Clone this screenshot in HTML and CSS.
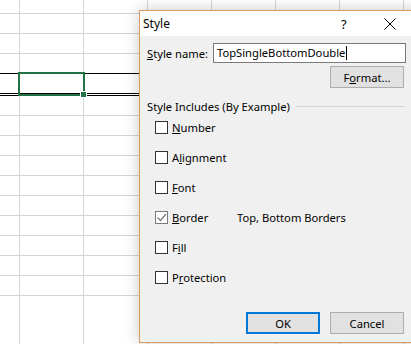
FILE: index.html
```html
<!doctype html>
<html lang="en">
  <head>
    <meta charset="UTF-8" />
    <title>Style</title>
    <link rel="stylesheet" href="styles.css">
  </head>
  <body>
    <div class="sheet">
      <div class="row first"></div>
      <div class="row"></div>
      <div class="row"></div>
      <div class="row top-single"></div>
      <div class="row bottom-double"></div>
      <div class="row"></div>
      <div class="row"></div>
      <div class="row"></div>
      <div class="row"></div>
      <div class="row"></div>
      <div class="row"></div>
      <div class="row"></div>
      <div class="row"></div>
      <div class="row"></div>
      <div class="row"></div>
      <div class="selection"><span class="handle"></span></div>
    </div>

    <div class="dialog">
      <div class="titlebar">
        <span class="title">Style</span>
        <span class="help">?</span>
        <svg class="close" width="12" height="12" viewBox="0 0 12 12">
          <path d="M0.5 0.5 L11.5 11.5 M11.5 0.5 L0.5 11.5" stroke="#000" stroke-width="1" fill="none" />
        </svg>
      </div>

      <div class="content">
        <div class="name-row">
          <label class="name-label"><u>S</u>tyle name:</label>
          <div class="name-input">TopSingleBottomDouble<span class="caret"></span></div>
        </div>
        <button class="btn format">F<u>o</u>rmat...</button>

        <div class="group-head">
          <span>Style Includes (By Example)</span>
          <span class="rule"></span>
        </div>

        <div class="options">
          <div class="option">
            <span class="box"></span><span class="opt-label"><u>N</u>umber</span>
          </div>
          <div class="option">
            <span class="box"></span><span class="opt-label">A<u>l</u>ignment</span>
          </div>
          <div class="option">
            <span class="box"></span><span class="opt-label"><u>F</u>ont</span>
          </div>
          <div class="option">
            <span class="box checked">
              <svg width="11" height="11" viewBox="0 0 11 11">
                <path d="M1.5 5.5 L4.5 8.5 L10 2" stroke="#7a7a7a" stroke-width="1.2" fill="none" />
              </svg>
            </span>
            <span class="opt-label"><u>B</u>order</span>
            <span class="opt-desc">Top, Bottom Borders</span>
          </div>
          <div class="option">
            <span class="box"></span><span class="opt-label">F<u>i</u>ll</span>
          </div>
          <div class="option">
            <span class="box"></span><span class="opt-label">P<u>r</u>otection</span>
          </div>
        </div>

        <div class="footer">
          <button class="btn ok">OK</button>
          <button class="btn">Cancel</button>
        </div>
      </div>
    </div>
  </body>
</html>
```

FILE: styles.css
```css
body {
  margin: 0;
  background-color: #ffffff;
  font-family: "Noto Sans", "Open Sans", sans-serif;
  font-size: 11.2px;
  color: #000000;
  overflow: hidden;
}
.sheet {
  position: relative;
  height: 344px;
  background-image: linear-gradient(to right, #d4d4d4 1px, transparent 1px);
  background-size: 64px 100%;
  background-position: 19px 0;
}
.row {
  box-sizing: border-box;
  height: 20px;
  border-bottom: 1px solid #d4d4d4;
}
.row.first {
  height: 14px;
}
.row.top-single {
  border-bottom: 1px solid #000000;
}
.row.bottom-double {
  height: 22px;
  border-bottom: 3px double #000000;
}
.selection {
  position: absolute;
  left: 18px;
  top: 72px;
  width: 63px;
  height: 20px;
  border: 2px solid #217346;
}
.handle {
  position: absolute;
  right: -4px;
  bottom: -4px;
  width: 5px;
  height: 5px;
  background-color: #217346;
  border: 1px solid #ffffff;
}
.dialog {
  position: absolute;
  left: 139px;
  top: 10px;
  width: 290px;
  height: 331px;
  background-color: #f0f0f0;
  border: 1px solid #dc9a63;
  box-shadow: 0 0 14px rgba(0, 0, 0, 0.22);
}
.titlebar {
  display: flex;
  align-items: center;
  height: 25px;
  background-color: #ffffff;
}
.title {
  margin-left: 3px;
  font-size: 12px;
}
.help {
  margin-left: 171px;
  font-size: 13px;
}
.close {
  margin-left: 37px;
}
.content {
  padding: 7px 0 0 7px;
}
.name-row {
  display: flex;
  align-items: center;
}
.name-label {
  width: 66px;
}
.name-input {
  box-sizing: border-box;
  width: 193px;
  height: 20px;
  padding: 1px 3px;
  background-color: #ffffff;
  border: 1px solid #7a7a7a;
  line-height: 16px;
}
.caret {
  display: inline-block;
  width: 1px;
  height: 14px;
  margin-left: 1px;
  vertical-align: -3px;
  background-color: #000000;
}
.btn {
  box-sizing: border-box;
  width: 74px;
  height: 22px;
  padding: 0;
  background-color: #e1e1e1;
  border: 1px solid #adadad;
  font-family: inherit;
  font-size: 11.2px;
  color: #000000;
}
.format {
  display: block;
  margin: 3px 0 0 183px;
}
.group-head {
  display: flex;
  align-items: center;
  gap: 6px;
  height: 11px;
  margin-top: 13px;
  padding-right: 25px;
}
.rule {
  flex: 1;
  height: 1px;
  background-color: #d5d5d5;
}
.option {
  display: flex;
  align-items: center;
  height: 30px;
  padding-left: 8px;
}
.box {
  box-sizing: border-box;
  display: flex;
  align-items: center;
  justify-content: center;
  width: 13px;
  height: 13px;
  background-color: #ffffff;
  border: 1px solid #333333;
}
.box.checked {
  border-color: #7a7a7a;
}
.opt-label {
  width: 65px;
  margin-left: 4px;
}
.footer {
  display: flex;
  gap: 10px;
  margin: 20px 0 0 99px;
}
.ok {
  border: 2px solid #0078d7;
}
```
